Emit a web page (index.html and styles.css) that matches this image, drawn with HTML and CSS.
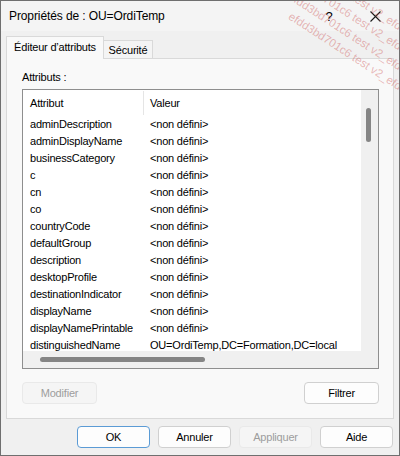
FILE: index.html
```html
<!DOCTYPE html>
<html lang="fr">
<head>
    <meta charset="UTF-8">
    <title>Propriétés de : OU=OrdiTemp</title>
    <link rel="stylesheet" href="styles.css">
</head>
<body>
    <div class="dialog">
        <div class="title-bar">
            <span class="title-text">Propriétés de : OU=OrdiTemp</span>
            <span class="title-help">?</span>
            <span class="title-close">
                <svg width="11" height="11" viewBox="0 0 11 11">
                    <path d="M0.5 0.5 L10.5 10.5 M10.5 0.5 L0.5 10.5" stroke="#1a1a1a" stroke-width="1.1" fill="none"/>
                </svg>
            </span>
        </div>

        <div class="dialog-body">
            <div class="tabs">
                <div class="tab tab-active">Éditeur d’attributs</div>
                <div class="tab">Sécurité</div>
            </div>

            <div class="tab-panel">
                <div class="panel-label">Attributs :</div>

                <div class="list-box">
                    <div class="list-content">
                        <div class="list-header">
                            <div class="col-name">Attribut</div>
                            <div class="col-value">Valeur</div>
                        </div>
                        <div class="list-row"><span>adminDescription</span><span>&lt;non défini&gt;</span></div>
                        <div class="list-row"><span>adminDisplayName</span><span>&lt;non défini&gt;</span></div>
                        <div class="list-row"><span>businessCategory</span><span>&lt;non défini&gt;</span></div>
                        <div class="list-row"><span>c</span><span>&lt;non défini&gt;</span></div>
                        <div class="list-row"><span>cn</span><span>&lt;non défini&gt;</span></div>
                        <div class="list-row"><span>co</span><span>&lt;non défini&gt;</span></div>
                        <div class="list-row"><span>countryCode</span><span>&lt;non défini&gt;</span></div>
                        <div class="list-row"><span>defaultGroup</span><span>&lt;non défini&gt;</span></div>
                        <div class="list-row"><span>description</span><span>&lt;non défini&gt;</span></div>
                        <div class="list-row"><span>desktopProfile</span><span>&lt;non défini&gt;</span></div>
                        <div class="list-row"><span>destinationIndicator</span><span>&lt;non défini&gt;</span></div>
                        <div class="list-row"><span>displayName</span><span>&lt;non défini&gt;</span></div>
                        <div class="list-row"><span>displayNamePrintable</span><span>&lt;non défini&gt;</span></div>
                        <div class="list-row"><span>distinguishedName</span><span>OU=OrdiTemp,DC=Formation,DC=local</span></div>
                    </div>
                    <div class="scroll-v"><div class="thumb-v"></div></div>
                    <div class="scroll-h"><div class="thumb-h"></div></div>
                    <div class="scroll-corner"></div>
                </div>

                <div class="panel-actions">
                    <button class="btn" disabled>Modifier</button>
                    <button class="btn">Filtrer</button>
                </div>
            </div>

            <div class="dialog-footer">
                <button class="btn btn-default">OK</button>
                <button class="btn">Annuler</button>
                <button class="btn" disabled>Appliquer</button>
                <button class="btn">Aide</button>
            </div>
        </div>

        <!-- filigrane en haut à droite -->
        <div class="watermark">
            <span class="wm-line" style="top: -51px;">efdd3bd701c6 test v2_efdd3bd701c6</span>
            <span class="wm-line" style="top: -31px;">efdd3bd701c6 test v2_efdd3bd701c6</span>
            <span class="wm-line" style="top: -11px;">efdd3bd701c6 test v2_efdd3bd701c6</span>
            <span class="wm-line" style="top: 9px;">efdd3bd701c6 test v2_efdd3bd701c6</span>
        </div>
    </div>
</body>
</html>
```

FILE: styles.css
```css
* {
    box-sizing: border-box;
}

body {
    margin: 0;
    font-family: "Liberation Sans", Arial, sans-serif;
    font-size: 11px;
    letter-spacing: -0.2px;
    color: #000;
}

.dialog {
    position: relative;
    width: 400px;
    height: 456px;
    border: 1px solid #6f6f6f;
    background-color: #f0f0f0;
    display: flex;
    flex-direction: column;
    overflow: hidden;
}

.title-bar {
    height: 30px;
    flex: none;
    display: flex;
    align-items: center;
    padding-left: 8px;
    background-color: #f4f4f4;
    font-size: 12px;
    letter-spacing: -0.1px;
}

.title-text {
    flex: 1;
}

.title-help {
    width: 12px;
    margin-right: 35px;
    font-size: 13px;
    text-align: center;
}

.title-close {
    width: 11px;
    height: 11px;
    margin-right: 18px;
    display: flex;
}

.dialog-body {
    flex: 1;
    display: flex;
    flex-direction: column;
    padding: 5px 5px 7px 5px;
}

/* onglets */
.tabs {
    height: 22px;
    flex: none;
    display: flex;
    align-items: flex-end;
}

.tab {
    height: 18px;
    width: 50px;
    margin-left: -1px;
    padding-top: 1px;
    border: 1px solid #d9d9d9;
    border-bottom: none;
    background-color: #f4f4f4;
    display: flex;
    align-items: center;
    justify-content: center;
}

.tab-active {
    width: 98px;
    height: 23px;
    margin-left: 0;
    margin-bottom: -1px;
    padding-top: 0;
    padding-bottom: 2px;
    background-color: #f9f9f9;
    position: relative;
    z-index: 1;
}

.tab-panel {
    flex: 1;
    display: flex;
    flex-direction: column;
    padding: 10px 14px 0 15px;
    border: 1px solid #d9d9d9;
    background-color: #f9f9f9;
}

.panel-label {
    height: 16px;
    line-height: 16px;
    margin-bottom: 4px;
}

/* liste des attributs */
.list-box {
    height: 280px;
    flex: none;
    border: 1px solid #8e8e8e;
    background-color: white;
    display: grid;
    grid-template-columns: 1fr 17px;
    grid-template-rows: 1fr 17px;
    overflow: hidden;
}

.list-content {
    overflow: hidden;
    white-space: nowrap;
}

.list-header {
    height: 26px;
    display: flex;
    align-items: center;
}

.col-name {
    width: 121px;
    height: 24px;
    line-height: 24px;
    padding-left: 7px;
    border-right: 1px solid #e5e5e5;
}

.col-value {
    padding-left: 6px;
}

.list-row {
    height: 17px;
    line-height: 16px;
    display: grid;
    grid-template-columns: 121px 1fr;
}

.list-row span:first-child {
    padding-left: 7px;
}

.list-row span:last-child {
    padding-left: 6px;
}

.scroll-v, .scroll-h, .scroll-corner {
    background-color: #f0f0f0;
}

.thumb-v {
    width: 5px;
    height: 34px;
    margin: 18px 0 0 5px;
    border-radius: 3px;
    background-color: #858585;
}

.thumb-h {
    width: 165px;
    height: 5px;
    margin: 6px 0 0 17px;
    border-radius: 3px;
    background-color: #858585;
}

.panel-actions {
    margin-top: 13px;
    display: flex;
    justify-content: space-between;
}

/* boutons */
.btn {
    width: 75px;
    height: 22px;
    padding: 0;
    border: 1px solid #d0d0d0;
    border-radius: 4px;
    background-color: #fdfdfd;
    font-family: inherit;
    font-size: 11px;
    letter-spacing: -0.2px;
    color: #000;
}

.btn:disabled {
    border-color: #e9e9e9;
    background-color: #f5f5f5;
    color: #9d9d9d;
}

.btn-default {
    border-color: #5b9bd5;
}

.dialog-footer {
    margin-top: 7px;
    padding-right: 1px;
    display: flex;
    justify-content: flex-end;
    gap: 8px;
}

.dialog-footer .btn {
    width: 73px;
}

.watermark {
    position: absolute;
    top: 0;
    left: 0;
    width: 100%;
    height: 100%;
    pointer-events: none;
}

.wm-line {
    position: absolute;
    left: 292px;
    font-size: 11.5px;
    letter-spacing: 0;
    line-height: 12px;
    white-space: nowrap;
    color: rgba(205, 85, 85, 0.42);
    transform: rotate(33deg);
    transform-origin: 0 0;
}
```
